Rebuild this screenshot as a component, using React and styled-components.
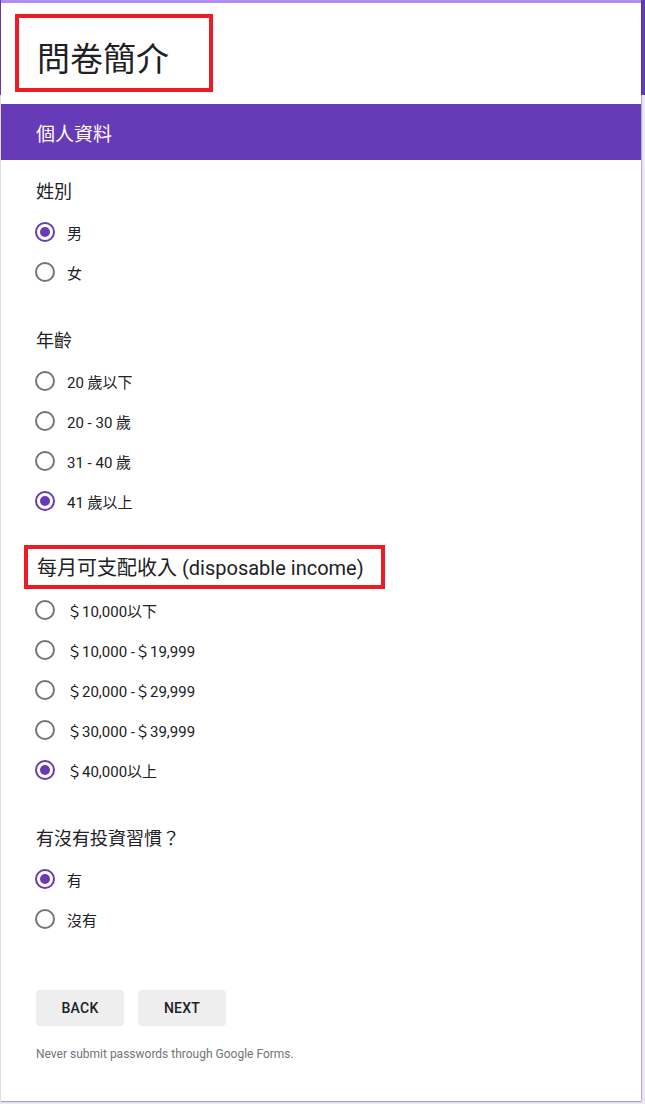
import React from "react";
import styled, { createGlobalStyle } from "styled-components";

const GlobalStyle = createGlobalStyle`
  html, body {
    margin: 0;
    padding: 0;
  }
  body {
    min-height: 100vh;
    background: linear-gradient(to bottom, #673ab7 0, #673ab7 95px, #ede7f6 95px);
    font-family: Roboto, "Noto Sans CJK TC", sans-serif;
    color: #202124;
  }
`;

const Page = styled.main`
  padding: 0 0 3px 1px;
`;

const Card = styled.div`
  width: 640px;
  background: #ffffff;
  box-shadow: 0 1px 1px rgba(60, 50, 90, 0.35), 1px 0 1px rgba(60, 50, 90, 0.25);
`;

const TitleSection = styled.header`
  border-top: 3px solid #b38df7;
  height: 104px;
  box-sizing: border-box;
  padding: 11px 0 0 14px;
`;

const Annotation = styled.div`
  border: 4px solid #ed1c24;
  box-sizing: border-box;
`;

const TitleMark = styled(Annotation)`
  width: 198px;
  height: 78px;
  display: flex;
  align-items: center;
  padding: 8px 0 0 18px;
`;

const FormTitle = styled.h1`
  margin: 0;
  font-family: "Noto Sans CJK TC", sans-serif;
  font-weight: 400;
  font-size: 33px;
  line-height: 1;
  color: #202124;
`;

const SectionHeader = styled.div`
  height: 56px;
  background: #673ab7;
  color: #ffffff;
  display: flex;
  align-items: center;
  padding-left: 35px;
  font-family: "Noto Sans CJK TC", sans-serif;
  font-size: 19px;
`;

const Content = styled.div`
  padding: 16px 34px 39px 34px;
  display: flex;
  flex-direction: column;
`;

const Question = styled.section`
  display: flex;
  flex-direction: column;
  margin-bottom: 33px;
`;

const QuestionTitle = styled.div`
  height: 24px;
  box-sizing: border-box;
  padding: 3px 0 0 1px;
  display: flex;
  align-items: center;
  font-family: Roboto, "Noto Sans CJK TC", sans-serif;
  font-size: ${(p) => p.$size || 18}px;
  color: #202124;
  margin-bottom: 12px;
`;

const QuestionMark = styled(Annotation)`
  width: 361px;
  height: 44px;
  margin: -2px 0 0 -12px;
  padding: 0 0 0 9px;
  display: flex;
  align-items: center;
`;

const OptionRow = styled.label`
  height: 40px;
  display: flex;
  align-items: center;
  gap: 12px;
  cursor: pointer;
`;

const Radio = styled.span`
  width: 20px;
  height: 20px;
  box-sizing: border-box;
  border-radius: 50%;
  border: 2px solid ${(p) => (p.$checked ? "#673ab7" : "#757575")};
  display: flex;
  align-items: center;
  justify-content: center;
  flex: none;

  &::after {
    content: "";
    width: 10px;
    height: 10px;
    border-radius: 50%;
    background: #673ab7;
    display: ${(p) => (p.$checked ? "block" : "none")};
  }
`;

const OptionLabel = styled.span`
  font-family: Roboto, "Noto Sans CJK TC", sans-serif;
  font-size: 15px;
  color: #202124;
`;

const ButtonRow = styled.div`
  display: flex;
  gap: 14px;
  margin-top: 18px;
  padding-left: 1px;
`;

const NavButton = styled.button`
  width: 88px;
  height: 36px;
  border: none;
  border-radius: 4px;
  background: #eeeeee;
  font-family: Roboto, sans-serif;
  font-weight: 500;
  font-size: 14px;
  letter-spacing: 0.25px;
  color: #202124;
  cursor: pointer;
`;

const Footnote = styled.p`
  margin: 20px 0 0 1px;
  font-family: Roboto, sans-serif;
  font-size: 12px;
  line-height: 16px;
  color: #70757a;
`;

const questions = [
  { title: "姓別", options: ["男", "女"], checked: 0 },
  {
    title: "年齡",
    options: ["20 歲以下", "20 - 30 歲", "31 - 40 歲", "41 歲以上"],
    checked: 3,
  },
  {
    title: "每月可支配收入 (disposable income)",
    marked: true,
    size: 20,
    options: [
      "＄10,000以下",
      "＄10,000 -＄19,999",
      "＄20,000 -＄29,999",
      "＄30,000 -＄39,999",
      "＄40,000以上",
    ],
    checked: 4,
  },
  { title: "有沒有投資習慣？", options: ["有", "沒有"], checked: 0 },
];

export default function App() {
  return (
    <>
      <GlobalStyle />
      <Page>
        <Card>
          <TitleSection>
            <TitleMark>
              <FormTitle>問卷簡介</FormTitle>
            </TitleMark>
          </TitleSection>
          <SectionHeader>個人資料</SectionHeader>
          <Content>
            {questions.map((q) => (
              <Question key={q.title}>
                <QuestionTitle $size={q.size}>
                  {q.marked ? <QuestionMark>{q.title}</QuestionMark> : q.title}
                </QuestionTitle>
                {q.options.map((o, i) => (
                  <OptionRow key={o}>
                    <Radio $checked={i === q.checked} />
                    <OptionLabel>{o}</OptionLabel>
                  </OptionRow>
                ))}
              </Question>
            ))}
            <ButtonRow>
              <NavButton>BACK</NavButton>
              <NavButton>NEXT</NavButton>
            </ButtonRow>
            <Footnote>Never submit passwords through Google Forms.</Footnote>
          </Content>
        </Card>
      </Page>
    </>
  );
}
